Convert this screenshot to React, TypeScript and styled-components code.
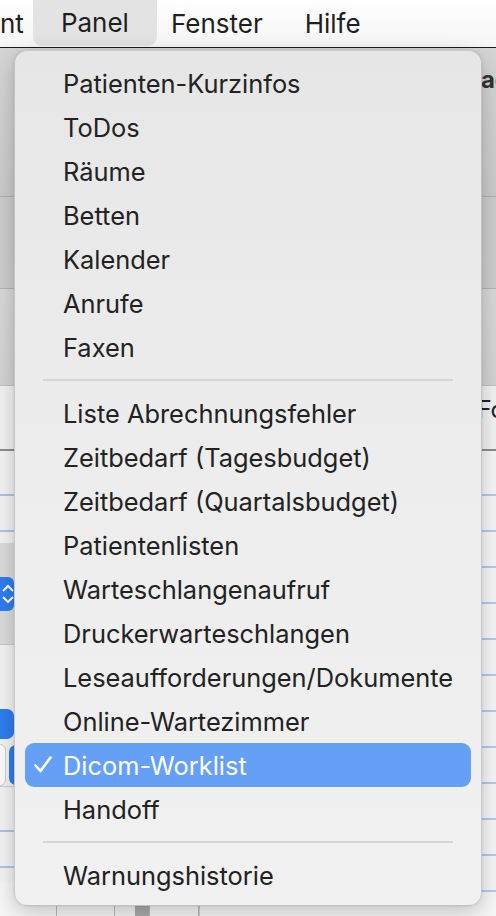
import React from 'react';
import styled, { createGlobalStyle, css } from 'styled-components';

const GlobalStyle = createGlobalStyle`
  html, body {
    margin: 0;
    padding: 0;
    background: #f4f4f4;
  }
  body {
    font-family: Inter, "Noto Sans", "Liberation Sans", sans-serif;
    -webkit-font-smoothing: antialiased;
  }
`;

type Entry = { label: string; checked?: boolean } | 'sep';

const entries: Entry[] = [
  { label: 'Patienten-Kurzinfos' },
  { label: 'ToDos' },
  { label: 'Räume' },
  { label: 'Betten' },
  { label: 'Kalender' },
  { label: 'Anrufe' },
  { label: 'Faxen' },
  'sep',
  { label: 'Liste Abrechnungsfehler' },
  { label: 'Zeitbedarf (Tagesbudget)' },
  { label: 'Zeitbedarf (Quartalsbudget)' },
  { label: 'Patientenlisten' },
  { label: 'Warteschlangenaufruf' },
  { label: 'Druckerwarteschlangen' },
  { label: 'Leseaufforderungen/Dokumente' },
  { label: 'Online-Wartezimmer' },
  { label: 'Dicom-Worklist', checked: true },
  { label: 'Handoff' },
  'sep',
  { label: 'Warnungshistorie' },
];

const menuTitles = ['nt', 'Panel', 'Fenster', 'Hilfe'];

const App: React.FC = () => {
  return (
    <>
      <GlobalStyle />
      <Screen>
        <MenuBar>
          {menuTitles.map((t, i) => (
            <MenuTitle key={t} $active={t === 'Panel'} $first={i === 0}>
              {t}
            </MenuTitle>
          ))}
        </MenuBar>

        <AppWindow>
          <Toolbar>
            <ToolbarTitle>ag</ToolbarTitle>
          </Toolbar>
          <FilterBand />
          <TabBand />
          <HeaderRow>
            <HeaderLabel>Fo</HeaderLabel>
          </HeaderRow>
          <Body>
            <SidePane>
              <SideGap $h={92} />
              <SideBand $h={102}>
                <Stepper>
                  <svg width="14" height="30" viewBox="0 0 14 30">
                    <path d="M3 12 L8 7 L13 12" fill="none" stroke="#fff" strokeWidth="2" />
                    <path d="M3 18 L8 23 L13 18" fill="none" stroke="#fff" strokeWidth="2" />
                  </svg>
                </Stepper>
              </SideBand>
              <SideButtons>
                <BlueKnob />
                <KnobRow>
                  <WhiteKnob />
                  <BlueKnob $tall />
                </KnobRow>
              </SideButtons>
              <SideGap $h={96} $line />
              <FooterCols>
                <span />
                <span />
                <FooterBlock />
                <span />
              </FooterCols>
            </SidePane>
            <ListPane>
              {Array.from({ length: 13 }).map((_, i) => (
                <ListLine key={i} />
              ))}
            </ListPane>
          </Body>
        </AppWindow>

        <Dropdown>
          {entries.map((e, i) =>
            e === 'sep' ? (
              <Separator key={`sep-${i}`} />
            ) : (
              <Item key={e.label} $selected={!!e.checked}>
                <Check>
                  {e.checked && (
                    <svg width="18" height="18" viewBox="0 0 18 18">
                      <path
                        d="M1.5 9.5 L6.5 15 L16.5 1.5"
                        fill="none"
                        stroke="#fff"
                        strokeWidth="2.6"
                        strokeLinecap="round"
                        strokeLinejoin="round"
                      />
                    </svg>
                  )}
                </Check>
                {e.label}
              </Item>
            ),
          )}
        </Dropdown>
      </Screen>
    </>
  );
};

const Screen = styled.div`
  position: relative;
  width: 496px;
  height: 916px;
  overflow: hidden;
  display: flex;
  flex-direction: column;
`;

const MenuBar = styled.nav`
  height: 48px;
  flex: none;
  display: flex;
  align-items: stretch;
  background: linear-gradient(#ffffff, #f6f6f6);
  border-bottom: 1.5px solid #1c1c1c;
  box-sizing: border-box;
`;

const MenuTitle = styled.div<{ $active?: boolean; $first?: boolean }>`
  display: flex;
  align-items: center;
  padding: 0 28px 1px;
  margin: 0 -7px;
  font-size: 26px;
  color: #1f1f1f;
  border-radius: 9px;
  ${(p) =>
    p.$first &&
    css`
      padding-left: 0;
      margin-left: 0;
      margin-right: -12px;
    `}
  ${(p) =>
    p.$active &&
    css`
      background: #e3e3e3;
      border-radius: 0 0 9px 9px;
      margin-bottom: 1px;
    `}
`;

const AppWindow = styled.div`
  flex: 1;
  display: flex;
  flex-direction: column;
  background: #f2f2f2;
`;

const Toolbar = styled.div`
  height: 149px;
  flex: none;
  background: linear-gradient(#d6d6d6, #cbcbcb);
  border-bottom: 1px solid #b0b0b0;
  display: flex;
  justify-content: flex-end;
  align-items: flex-start;
  box-sizing: border-box;
  overflow: hidden;
`;

const ToolbarTitle = styled.span`
  font-weight: 700;
  font-size: 24px;
  color: #333;
  margin-top: 17px;
  margin-right: -14px;
`;

const FilterBand = styled.div`
  height: 92px;
  flex: none;
  background: #cdcdcd;
  border-bottom: 1px solid #b3b3b3;
  box-sizing: border-box;
`;

const TabBand = styled.div`
  height: 97px;
  flex: none;
  background: linear-gradient(#d9d9d9, #d3d3d3);
  border-bottom: 1px solid #c4c4c4;
  box-sizing: border-box;
`;

const HeaderRow = styled.div`
  height: 65px;
  flex: none;
  background: #f3f3f3;
  border-bottom: 2px solid #8c8c8c;
  box-sizing: border-box;
  display: flex;
  justify-content: flex-end;
  align-items: flex-start;
  overflow: hidden;
`;

const HeaderLabel = styled.span`
  font-size: 24px;
  color: #222;
  margin-top: 9px;
  margin-right: -9px;
`;

const Body = styled.div`
  flex: 1;
  display: grid;
  grid-template-columns: 200px 1fr;
  background: #f7f7f7;
`;

const SidePane = styled.div`
  display: flex;
  flex-direction: column;
  border-right: 1px solid #d0d0d0;
`;

const SideGap = styled.div<{ $h: number; $line?: boolean }>`
  height: ${(p) => p.$h}px;
  flex: none;
  background: #f4f4f4;
  box-sizing: border-box;
  ${(p) =>
    p.$line &&
    css`
      border-top: 1px solid #d0d0d0;
    `}
  background-image: linear-gradient(#a9c6ee, #a9c6ee), linear-gradient(#a9c6ee, #a9c6ee);
  background-size: 100% 2px;
  background-repeat: no-repeat;
  background-position: 0 43px, 0 79px;
`;

const SideBand = styled.div<{ $h: number }>`
  height: ${(p) => p.$h}px;
  flex: none;
  background: #dcdcdc;
  border-bottom: 1px solid #c9c9c9;
  box-sizing: border-box;
  display: flex;
  align-items: center;
`;

const Stepper = styled.div`
  width: 30px;
  height: 34px;
  margin-left: -16px;
  border-radius: 6px;
  background: #2f7df0;
  display: flex;
  justify-content: flex-end;
  align-items: center;
`;

const SideButtons = styled.div`
  padding: 64px 0 0;
  display: flex;
  flex-direction: column;
  gap: 5px;
  background: #f4f4f4;
`;

const KnobRow = styled.div`
  display: flex;
  gap: 3px;
  align-items: center;
`;

const BlueKnob = styled.div<{ $tall?: boolean }>`
  width: 24px;
  height: ${(p) => (p.$tall ? 40 : 30)}px;
  margin-left: ${(p) => (p.$tall ? 0 : -10)}px;
  border-radius: 7px;
  background: #2f7df0;
`;

const WhiteKnob = styled.div`
  width: 16px;
  height: 40px;
  margin-left: -12px;
  border-radius: 6px;
  background: #fdfdfd;
  border: 1px solid #cfcfcf;
`;

const FooterCols = styled.div`
  flex: 1;
  display: grid;
  grid-template-columns: 57px 58px 35px 1fr;
  span {
    border-right: 1px solid #b9b9b9;
  }
`;

const FooterBlock = styled.span`
  background: linear-gradient(90deg, #f4f4f4 20px, #aaaaaa 20px);
`;

const ListPane = styled.div`
  display: flex;
  flex-direction: column;
  padding-top: 43px;
  background: #f7f7f7;
`;

const ListLine = styled.div`
  height: 36px;
  flex: none;
  border-top: 2px solid #aecbf1;
  box-sizing: border-box;
`;

const Dropdown = styled.div`
  position: absolute;
  top: 50px;
  left: 14px;
  width: 468px;
  height: 856px;
  box-sizing: border-box;
  padding: 10px 10px 9px;
  border-radius: 13px;
  background: linear-gradient(#e6e6e6, #ececec 40%, #f1f1f1);
  border: 1px solid rgba(0, 0, 0, 0.16);
  box-shadow: 0 6px 22px rgba(0, 0, 0, 0.22), 0 0 2px rgba(0, 0, 0, 0.12);
  display: flex;
  flex-direction: column;
`;

const Item = styled.div<{ $selected?: boolean }>`
  height: 44px;
  flex: none;
  display: flex;
  align-items: center;
  border-radius: 9px;
  font-size: 25.4px;
  color: #222;
  white-space: nowrap;
  ${(p) =>
    p.$selected &&
    css`
      background: #66a0f6;
      color: #fff;
    `}
`;

const Check = styled.span`
  width: 38px;
  flex: none;
  display: flex;
  justify-content: flex-end;
  padding-right: 11px;
  box-sizing: border-box;
  svg {
    display: block;
  }
`;

const Separator = styled.div`
  height: 22px;
  flex: none;
  display: flex;
  align-items: center;
  padding: 0 18px;
  &::after {
    content: '';
    flex: 1;
    height: 2px;
    background: #d5d5d5;
  }
`;

export default App;
